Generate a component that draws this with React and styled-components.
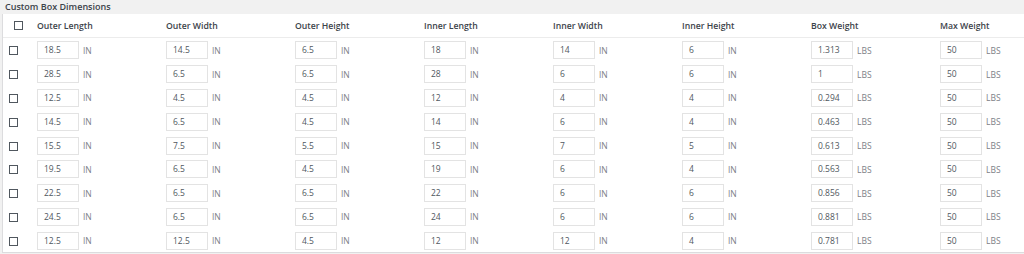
import React from 'react';
import styled, { createGlobalStyle } from 'styled-components';

const GlobalStyle = createGlobalStyle`
  html, body {
    margin: 0;
    padding: 0;
    background: #f1f1f1;
    font-family: "Open Sans", "Noto Sans", Arial, sans-serif;
  }
`;

const Wrapper = styled.div`
  width: 1024px;
  height: 254px;
  overflow: hidden;
`;

const Title = styled.div`
  height: 14px;
  padding-left: 5px;
  font-size: 9px;
  font-weight: 600;
  line-height: 13px;
  color: #3c434a;
`;

const Panel = styled.div`
  margin-left: 2px;
  background: #fff;
  border-left: 1px solid #dcdcde;
  border-bottom: 1px solid #dcdcde;
`;

const Row = styled.div`
  display: grid;
  grid-template-columns: 34px repeat(7, 129px) 1fr;
  align-items: center;
  height: ${({ $header }) => ($header ? '23px' : '23.8px')};
  border-bottom: ${({ $header }) => ($header ? '1px solid #ececec' : 'none')};
`;

const CheckCell = styled.div`
  display: flex;
  align-items: center;
  padding-left: ${({ $header }) => ($header ? '11px' : '6px')};
  margin-top: ${({ $header }) => ($header ? '-1px' : '2px')};
`;

const Check = styled.span`
  display: block;
  width: 7px;
  height: 7px;
  border: 1px solid #50575e;
  background: #fff;
`;

const HeadLabel = styled.div`
  font-size: 8.7px;
  font-weight: 600;
  color: #3c434a;
  white-space: nowrap;
  margin-top: 1px;
`;

const Cell = styled.div`
  display: flex;
  align-items: center;
  margin-top: 1px;
`;

const Input = styled.div`
  box-sizing: border-box;
  width: 42px;
  height: 18px;
  border: 1px solid #e3e3e3;
  padding-left: 6px;
  font-size: 8.5px;
  line-height: 16px;
  color: #50575e;
`;

const Unit = styled.span`
  margin-left: 4px;
  font-size: 8.5px;
  color: #7d8187;
`;

const headers = [
  'Outer Length',
  'Outer Width',
  'Outer Height',
  'Inner Length',
  'Inner Width',
  'Inner Height',
  'Box Weight',
  'Max Weight',
];

const rows = [
  ['18.5', '14.5', '6.5', '18', '14', '6', '1.313', '50'],
  ['28.5', '6.5', '6.5', '28', '6', '6', '1', '50'],
  ['12.5', '4.5', '4.5', '12', '4', '4', '0.294', '50'],
  ['14.5', '6.5', '4.5', '14', '6', '4', '0.463', '50'],
  ['15.5', '7.5', '5.5', '15', '7', '5', '0.613', '50'],
  ['19.5', '6.5', '4.5', '19', '6', '4', '0.563', '50'],
  ['22.5', '6.5', '6.5', '22', '6', '6', '0.856', '50'],
  ['24.5', '6.5', '6.5', '24', '6', '6', '0.881', '50'],
  ['12.5', '12.5', '4.5', '12', '12', '4', '0.781', '50'],
];

const App = () => (
  <>
    <GlobalStyle />
    <Wrapper>
      <Title>Custom Box Dimensions</Title>
      <Panel>
        <Row $header>
          <CheckCell $header>
            <Check />
          </CheckCell>
          {headers.map((h) => (
            <HeadLabel key={h}>{h}</HeadLabel>
          ))}
        </Row>
        {rows.map((r, i) => (
          <Row key={i}>
            <CheckCell>
              <Check />
            </CheckCell>
            {r.map((v, j) => (
              <Cell key={j}>
                <Input>{v}</Input>
                <Unit>{j >= 6 ? 'LBS' : 'IN'}</Unit>
              </Cell>
            ))}
          </Row>
        ))}
      </Panel>
    </Wrapper>
  </>
);

export default App;
